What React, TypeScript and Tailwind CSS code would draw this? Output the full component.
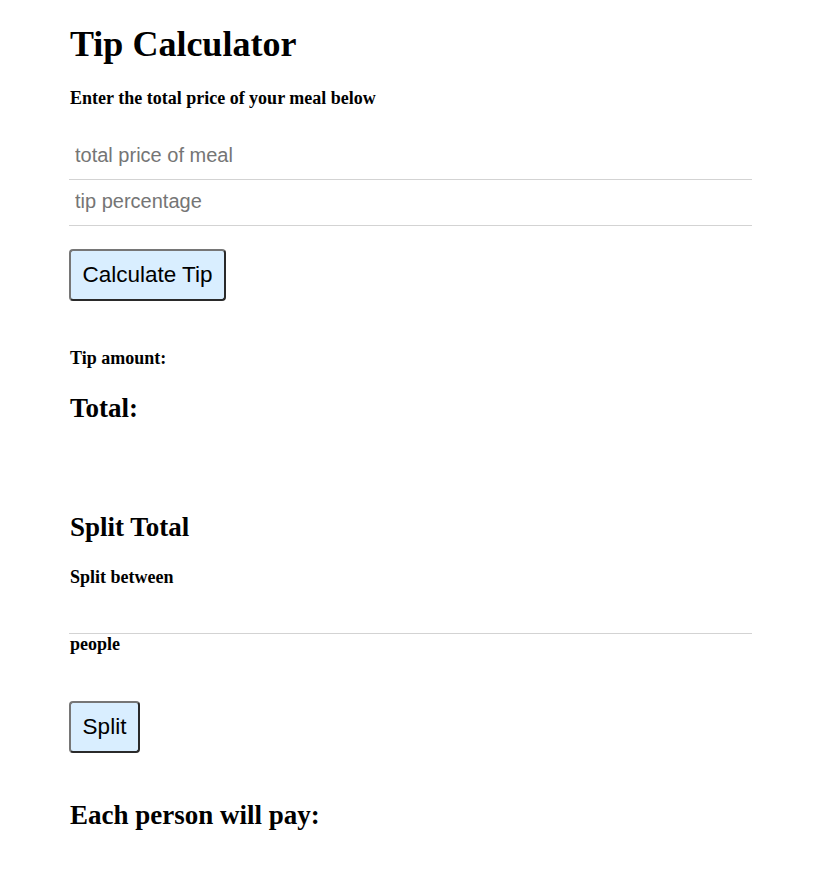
import React from "react";

const serif = "font-['Liberation_Serif','Times_New_Roman',serif] font-bold text-black";
const sans = "font-['Liberation_Sans',Arial,sans-serif]";

export default function App() {
  return (
    <div className="min-h-[893px] w-full bg-white">
      <div className="ml-[69px] flex w-[683px] flex-col pt-[24px]">
        <h1 className={`${serif} pl-px text-[36px] leading-[40px]`}>Tip Calculator</h1>
        <h4 className={`${serif} mt-[24px] pl-px text-[18px] leading-[20px]`}>
          Enter the total price of your meal below
        </h4>
        <input
          className={`${sans} mt-[26px] h-[46px] w-full border-b border-[#d3d3d3] bg-white px-[6px] pb-[2px] text-[20px] text-black outline-none placeholder:text-[#757575]`}
          placeholder="total price of meal"
        />
        <input
          className={`${sans} h-[46px] w-full border-b border-[#d3d3d3] bg-white px-[6px] pb-[2px] text-[20px] text-black outline-none placeholder:text-[#757575]`}
          placeholder="tip percentage"
        />
        <div className="mt-[23px]">
          <button
            className={`${sans} flex h-[52px] w-[157px] items-center justify-center rounded-[4px] border-2 border-t-[#767676] border-l-[#767676] border-b-[#2a2a2a] border-r-[#2a2a2a] bg-[#d9eeff] text-[22.5px] text-black`}
          >
            Calculate Tip
          </button>
        </div>
        <h4 className={`${serif} mt-[47px] pl-px text-[18px] leading-[20px]`}>Tip amount:</h4>
        <h2 className={`${serif} mt-[25px] pl-px text-[27px] leading-[30px]`}>Total:</h2>
        <h2 className={`${serif} mt-[89px] pl-px text-[27px] leading-[30px]`}>Split Total</h2>
        <h4 className={`${serif} mt-[25px] pl-px text-[18px] leading-[20px]`}>Split between</h4>
        <input
          className={`${sans} mt-[1px] h-[46px] w-full border-b border-[#d3d3d3] bg-white px-[6px] text-[20px] text-black outline-none`}
        />
        <h4 className={`${serif} pl-px text-[18px] leading-[20px]`}>people</h4>
        <div className="mt-[47px]">
          <button
            className={`${sans} flex h-[52px] w-[71px] items-center justify-center rounded-[4px] border-2 border-t-[#767676] border-l-[#767676] border-b-[#2a2a2a] border-r-[#2a2a2a] bg-[#d9eeff] text-[22.5px] text-black`}
          >
            Split
          </button>
        </div>
        <h2 className={`${serif} mt-[47px] pl-px text-[27px] leading-[30px]`}>Each person will pay:</h2>
      </div>
    </div>
  );
}
